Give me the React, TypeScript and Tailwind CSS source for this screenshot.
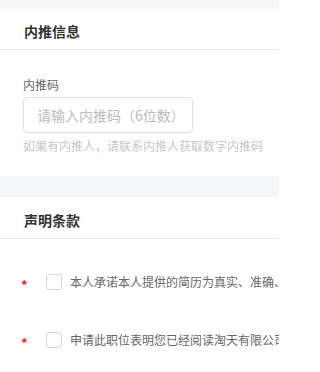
const font = { fontFamily: '"Noto Sans CJK SC", "Noto Sans", sans-serif' };

function Agreement({ text }: { text: string }) {
  return (
    <div className="flex h-[58px] items-center overflow-hidden whitespace-nowrap">
      <span className="flex h-[16px] w-[46px] shrink-0 items-center pl-[21px] pt-[5px] text-[13px] font-bold leading-none text-[#e5262a]">
        *
      </span>
      <span className="h-[16px] w-[16px] shrink-0 rounded-[3px] border border-[#d3d6db] bg-white" />
      <span className="ml-[8px] text-[12px] text-[#666]">{text}</span>
    </div>
  );
}

export default function App() {
  return (
    <div className="h-[372px] w-[279px] overflow-hidden bg-[#f5f7f9] pt-[9px]" style={font}>
      {/* 内推信息 */}
      <section className="bg-white">
        <div className="flex h-[41px] items-center border-b border-[#e8eaed] px-6 pt-[4px]">
          <h2 className="text-[14px] font-bold text-[#333]">内推信息</h2>
        </div>
        <div className="pb-[22px] pl-[23px] pt-[26px]">
          <div className="text-[12px] leading-[17px] text-[#666]">内推码</div>
          <div className="mt-[4px] flex h-[36px] w-[170px] items-center rounded-[4px] border border-[#dcdfe3] pl-[13px] text-[14px] text-[#b8bcc2]">
            请输入内推码（6位数）
          </div>
          <div className="mt-[4px] whitespace-nowrap text-[12px] leading-[17px] text-[#c4c7cc]">
            如果有内推人，请联系内推人获取数字内推码
          </div>
        </div>
      </section>

      {/* 声明条款 */}
      <section className="mt-[21px] bg-white">
        <div className="flex h-[42px] items-center border-b border-[#e8eaed] px-6 pt-[6px]">
          <h2 className="text-[14px] font-bold text-[#333]">声明条款</h2>
        </div>
        <div className="pt-[14px] pb-6">
          <Agreement text="本人承诺本人提供的简历为真实、准确、完整的信息" />
          <Agreement text="申请此职位表明您已经阅读淘天有限公司相关声明" />
        </div>
      </section>
    </div>
  );
}
